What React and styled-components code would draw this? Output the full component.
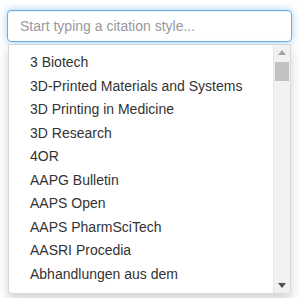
import React from 'react';
import styled, { createGlobalStyle } from 'styled-components';

const GlobalStyle = createGlobalStyle`
  html, body {
    margin: 0;
    padding: 0;
    background: #fff;
    font-family: "Liberation Sans", Arial, sans-serif;
  }
`;

// ============== Geral
const Wrapper = styled.div`
  width: 300px;
  height: 298px;
  padding: 10px 8px 0 7px;
  box-sizing: border-box;
  overflow: hidden;
  font-family: "Liberation Sans", Arial, sans-serif;
`;

// ============== Campo de busca
const SearchInput = styled.input`
  display: block;
  width: 100%;
  height: 32px;
  box-sizing: border-box;
  padding: 6px 10px 6px 12px;
  font-family: "Liberation Sans", Arial, sans-serif;
  font-size: 14px;
  color: #555;
  border: 1px solid #66afe9;
  border-radius: 4px;
  outline: none;
  box-shadow: inset 0 1px 1px rgba(0, 0, 0, 0.075), 0 0 8px rgba(102, 175, 233, 0.6);

  &::placeholder {
    color: #999;
  }
`;

// ============== Lista
const Dropdown = styled.div`
  display: flex;
  margin: 2px 1px 0 1px;
  height: 248px;
  background: #fff;
  border: 1px solid rgba(0, 0, 0, 0.15);
  border-radius: 0 0 4px 4px;
  box-shadow: 0 6px 12px rgba(0, 0, 0, 0.175);
  overflow: hidden;
`;

const List = styled.ul`
  flex: 1;
  list-style: none;
  margin: 0;
  padding: 6px 0 0 0;
`;

const Item = styled.li`
  padding: 0 0 0 21px;
  height: 23.5px;
  line-height: 23.5px;
  font-size: 14px;
  color: #333;
  white-space: nowrap;
`;

// ============== Barra de rolagem
const Scrollbar = styled.div`
  width: 16px;
  display: flex;
  flex-direction: column;
  background: #f1f1f1;
  border-left: 1px solid #e6e6e6;
`;

const Arrow = styled.div`
  height: 15px;
  display: flex;
  align-items: center;
  justify-content: center;
`;

const Thumb = styled.div`
  margin: 2px 1px;
  height: 19px;
  background: #c1c1c1;
`;

const Track = styled.div`
  flex: 1;
`;

const items = [
  '3 Biotech',
  '3D-Printed Materials and Systems',
  '3D Printing in Medicine',
  '3D Research',
  '4OR',
  'AAPG Bulletin',
  'AAPS Open',
  'AAPS PharmSciTech',
  'AASRI Procedia',
  'Abhandlungen aus dem',
];

function Triangle({ up }) {
  return (
    <svg width="8" height="5" viewBox="0 0 8 5">
      <polygon points={up ? '0,5 8,5 4,0' : '0,0 8,0 4,5'} fill={up ? '#a3a3a3' : '#505050'} />
    </svg>
  );
}

function App() {
  return (
    <Wrapper>
      <GlobalStyle />
      <SearchInput placeholder="Start typing a citation style..." autoFocus />
      <Dropdown>
        <List>
          {items.map((nome) => (
            <Item key={nome}>{nome}</Item>
          ))}
        </List>
        <Scrollbar>
          <Arrow><Triangle up /></Arrow>
          <Thumb />
          <Track />
          <Arrow><Triangle /></Arrow>
        </Scrollbar>
      </Dropdown>
    </Wrapper>
  );
}

export default App;
